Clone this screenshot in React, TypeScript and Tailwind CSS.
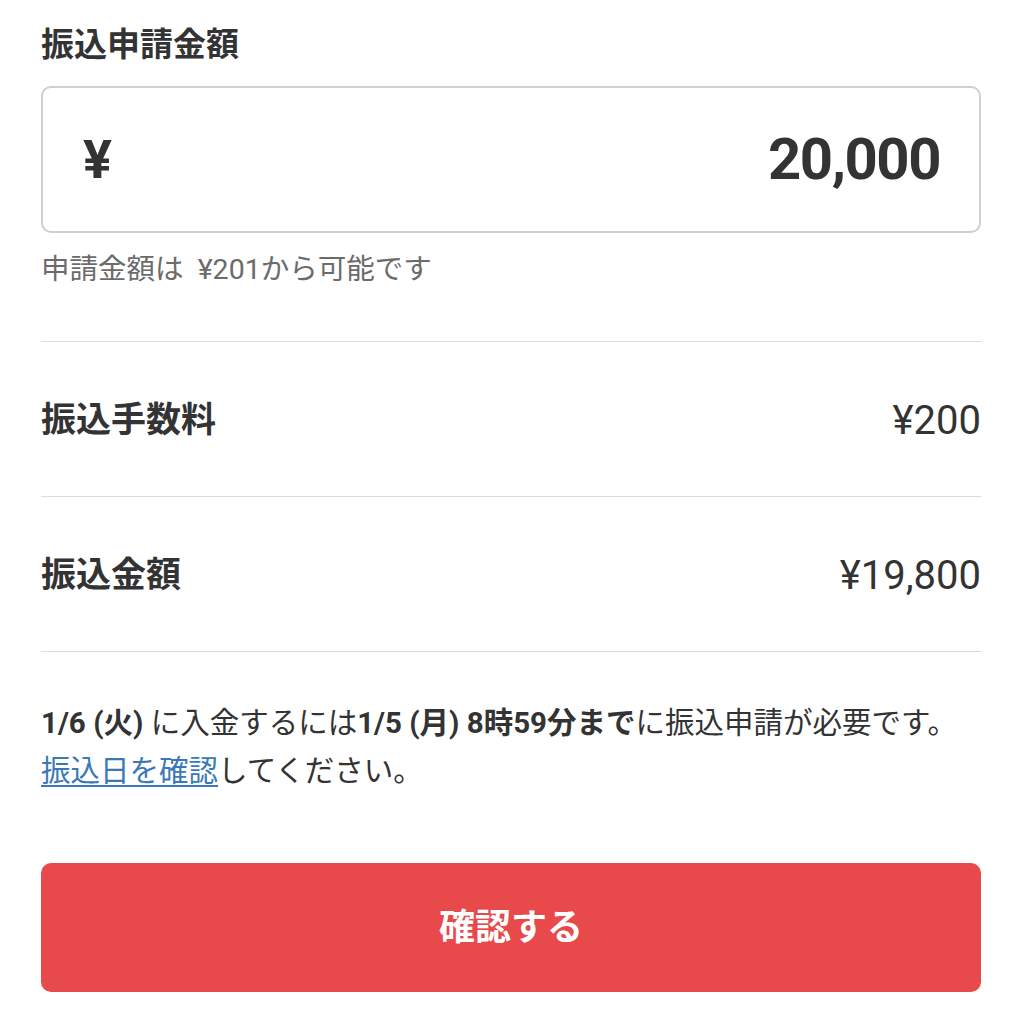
import React from 'react';

const font = { fontFamily: 'Roboto, "Noto Sans CJK JP", sans-serif' };

export default function App() {
  return (
    <div className="min-h-screen bg-white text-[#333]" style={font}>
      <div className="px-[41px] pt-[25px]">
        {/* 申請金額 */}
        <h1 className="text-[33px] leading-[40px] font-bold">振込申請金額</h1>

        <div className="mt-[21px] h-[147px] border-2 border-[#cfcfcf] rounded-[10px] flex items-center justify-between pl-[40px] pr-[39px]">
          <span className="text-[54px] font-bold">¥</span>
          <span className="text-[58px] font-bold tracking-tight">20,000</span>
        </div>

        <p className="mt-[17px] text-[28.5px] leading-[40px] text-[#6b6b6b]">申請金額は&nbsp; ¥201から可能です</p>

        {/* 内訳 */}
        <div className="mt-[51px] border-t border-[#dcdcdc]">
          <div className="h-[155px] pt-[4px] flex items-center justify-between border-b border-[#dcdcdc]">
            <span className="text-[35px] font-bold">振込手数料</span>
            <span className="text-[40px]">¥200</span>
          </div>
          <div className="h-[155px] pt-[4px] flex items-center justify-between border-b border-[#dcdcdc]">
            <span className="text-[35px] font-bold">振込金額</span>
            <span className="text-[40px]">¥19,800</span>
          </div>
        </div>

        <p className="mt-[47px] text-[29.5px] leading-[48px]">
          <b>1/6 (火)</b> に入金するには<b>1/5 (月) 8時59分まで</b>に振込申請が必要です。
          <br />
          <a href="#" className="text-[#3a78b8] underline underline-offset-4 decoration-2">振込日を確認</a>してください。
        </p>

        <button className="mt-[68px] w-full h-[129px] rounded-[10px] bg-[#e8494b] text-white text-[36px] font-bold">
          確認する
        </button>
      </div>
    </div>
  );
}
